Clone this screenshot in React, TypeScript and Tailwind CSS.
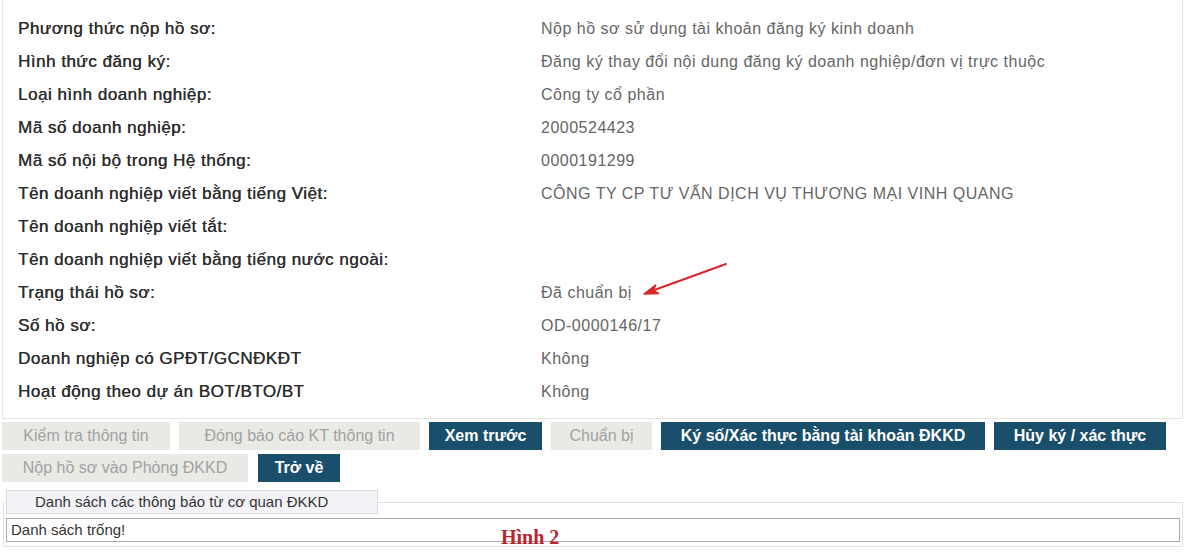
import React from 'react';

const rows: [string, string][] = [
  ['Phương thức nộp hồ sơ:', 'Nộp hồ sơ sử dụng tài khoản đăng ký kinh doanh'],
  ['Hình thức đăng ký:', 'Đăng ký thay đổi nội dung đăng ký doanh nghiệp/đơn vị trực thuộc'],
  ['Loại hình doanh nghiệp:', 'Công ty cổ phần'],
  ['Mã số doanh nghiệp:', '2000524423'],
  ['Mã số nội bộ trong Hệ thống:', '0000191299'],
  ['Tên doanh nghiệp viết bằng tiếng Việt:', 'CÔNG TY CP TƯ VẤN DỊCH VỤ THƯƠNG MẠI VINH QUANG'],
  ['Tên doanh nghiệp viết tắt:', ''],
  ['Tên doanh nghiệp viết bằng tiếng nước ngoài:', ''],
  ['Trạng thái hồ sơ:', 'Đã chuẩn bị'],
  ['Số hồ sơ:', 'OD-0000146/17'],
  ['Doanh nghiệp có GPĐT/GCNĐKĐT', 'Không'],
  ['Hoạt động theo dự án BOT/BTO/BT', 'Không'],
];

type Btn = { label: string; w: string; dark?: boolean };

const row1: Btn[] = [
  { label: 'Kiểm tra thông tin', w: 'w-[168px]' },
  { label: 'Đóng báo cáo KT thông tin', w: 'w-[241px]' },
  { label: 'Xem trước', w: 'w-[113px]', dark: true },
  { label: 'Chuẩn bị', w: 'w-[101px]' },
  { label: 'Ký số/Xác thực bằng tài khoản ĐKKD', w: 'w-[324px]', dark: true },
  { label: 'Hủy ký / xác thực', w: 'w-[172px]', dark: true },
];

const row2: Btn[] = [
  { label: 'Nộp hồ sơ vào Phòng ĐKKD', w: 'w-[246px]' },
  { label: 'Trở về', w: 'w-[82px]', dark: true },
];

function ActionButton({ b }: { b: Btn }) {
  return (
    <button
      type="button"
      className={`${b.w} h-[28px] shrink-0 flex items-center justify-center text-[16px] whitespace-nowrap ${
        b.dark ? 'bg-[#1a4f6c] text-white font-bold' : 'bg-[#e9e9e5] text-[#a3a3a3]'
      }`}
    >
      {b.label}
    </button>
  );
}

export default function App() {
  return (
    <div className="relative w-[1200px] h-[557px] bg-white overflow-hidden font-['Liberation_Sans',Arial,sans-serif]">
      {/* thông tin hồ sơ */}
      <div className="ml-[2px] w-[1181px] h-[419px] border border-t-0 border-[#e4e4e4] pt-[12px] pl-[15px]">
        {rows.map(([label, value]) => (
          <div key={label} className="grid grid-cols-[523px_1fr] h-[33px] items-center">
            <span className="text-[17px] text-[#2e2e2e] tracking-[0.5px] [text-shadow:0.3px_0_0_#2e2e2e]">{label}</span>
            <span className="relative text-[16px] text-[#666] tracking-[0.5px]">
              {value}
              {label === 'Trạng thái hồ sơ:' && (
                <svg className="absolute left-[95px] top-[-21px]" width="96" height="40" viewBox="0 0 96 40">
                  <line x1="90" y1="4" x2="17" y2="30.5" stroke="#d8262b" strokeWidth="2" strokeLinecap="round" />
                  <path d="M8 34 L19.6 25 L17.4 30.6 L22.6 33.4 Z" fill="#d8262b" stroke="#d8262b" strokeWidth="1.5" strokeLinejoin="round" />
                </svg>
              )}
            </span>
          </div>
        ))}
      </div>

      {/* nút chức năng */}
      <div className="mt-[3px] pl-[2px] flex flex-col gap-[4px]">
        <div className="flex gap-[9px]">
          {row1.map((b) => (
            <ActionButton key={b.label} b={b} />
          ))}
        </div>
        <div className="flex gap-[10px]">
          {row2.map((b) => (
            <ActionButton key={b.label} b={b} />
          ))}
        </div>
      </div>

      {/* danh sách thông báo */}
      <fieldset className="mt-[8px] ml-[3px] w-[1180px] border border-[#e2e2e2] px-[2px] pb-[4px]">
        <legend className="ml-0 h-[24px] w-[372px] border border-[#dcdce2] bg-[#f3f3f7] pl-[28px] text-[15px] leading-[22px] text-[#333]">
          Danh sách các thông báo từ cơ quan ĐKKD
        </legend>
        <div className="mt-[4px] h-[24px] border border-[#a9a9a9] pl-[4px] text-[15px] leading-[22px] text-[#333]">
          Danh sách trống!
        </div>
      </fieldset>

      <span className="absolute left-[501px] top-[522px] font-['Liberation_Serif',serif] font-bold text-[20px] text-[#b8262e]">
        Hình 2
      </span>
    </div>
  );
}
